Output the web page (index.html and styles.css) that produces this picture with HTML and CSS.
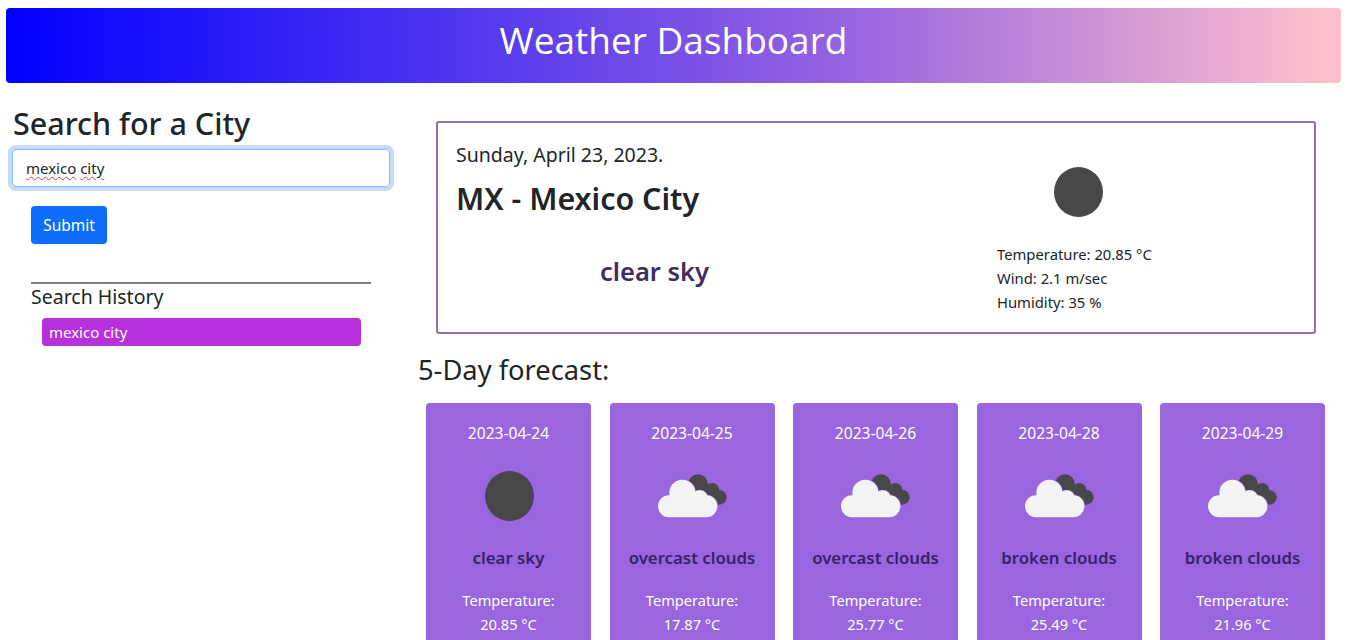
FILE: index.html
```html
<!DOCTYPE html>
<html lang="en">
<head>
  <meta charset="UTF-8" />
  <meta name="viewport" content="width=device-width, initial-scale=1.0"/>
  <title>Weather Dashboard</title>
  <link rel="stylesheet" href="styles.css">
</head>
<body>
  <header class="banner">
    <h1>Weather Dashboard</h1>
  </header>

  <div class="layout">
    <aside class="sidebar">
      <h2>Search for a City</h2>
      <div class="city-input" role="textbox" contenteditable="true"><span class="misspelt">mexico</span> <span class="misspelt">city</span></div>
      <button class="submit-btn">Submit</button>
      <section class="history">
        <h3>Search History</h3>
        <button class="history-btn">mexico city</button>
      </section>
    </aside>

    <main class="content">
      <section class="today">
        <div class="today-left">
          <p class="today-date">Sunday, April 23, 2023.</p>
          <h2 class="today-city">MX - Mexico City</h2>
          <p class="today-desc">clear sky</p>
        </div>
        <div class="today-right">
          <div class="today-icon"><span class="sun"></span></div>
          <ul class="today-stats">
            <li>Temperature: 20.85 °C</li>
            <li>Wind: 2.1 m/sec</li>
            <li>Humidity: 35 %</li>
          </ul>
        </div>
      </section>

      <h3 class="forecast-title">5-Day forecast:</h3>
      <div class="forecast">
        <article class="card">
          <p class="card-date">2023-04-24</p>
          <div class="card-icon"><span class="sun"></span></div>
          <p class="card-desc">clear sky</p>
          <p class="card-temp">Temperature:<br>20.85 °C</p>
        </article>
        <article class="card">
          <p class="card-date">2023-04-25</p>
          <div class="card-icon"><svg class="cloud" viewBox="0 0 210 138"><use href="#clouds"/></svg></div>
          <p class="card-desc">overcast clouds</p>
          <p class="card-temp">Temperature:<br>17.87 °C</p>
        </article>
        <article class="card">
          <p class="card-date">2023-04-26</p>
          <div class="card-icon"><svg class="cloud" viewBox="0 0 210 138"><use href="#clouds"/></svg></div>
          <p class="card-desc">overcast clouds</p>
          <p class="card-temp">Temperature:<br>25.77 °C</p>
        </article>
        <article class="card">
          <p class="card-date">2023-04-28</p>
          <div class="card-icon"><svg class="cloud" viewBox="0 0 210 138"><use href="#clouds"/></svg></div>
          <p class="card-desc">broken clouds</p>
          <p class="card-temp">Temperature:<br>25.49 °C</p>
        </article>
        <article class="card">
          <p class="card-date">2023-04-29</p>
          <div class="card-icon"><svg class="cloud" viewBox="0 0 210 138"><use href="#clouds"/></svg></div>
          <p class="card-desc">broken clouds</p>
          <p class="card-temp">Temperature:<br>21.96 °C</p>
        </article>
      </div>
    </main>
  </div>

  <svg class="sprites" width="0" height="0">
    <symbol id="clouds" viewBox="0 0 210 138">
      <g fill="#48484a">
        <circle cx="120" cy="31" r="30"/>
        <circle cx="163" cy="48" r="21"/>
        <circle cx="184" cy="70" r="22"/>
        <rect x="115" y="40" width="60" height="50"/>
      </g>
      <g fill="#f3f3f3" stroke="#9966e0" stroke-width="4">
        <circle cx="73" cy="56" r="39"/>
        <circle cx="125" cy="74" r="25"/>
        <rect x="0" y="64" width="178" height="66" rx="33"/>
      </g>
      <g fill="#f3f3f3">
        <circle cx="73" cy="56" r="39"/>
        <circle cx="125" cy="74" r="25"/>
        <rect x="0" y="64" width="178" height="66" rx="33"/>
      </g>
    </symbol>
  </svg>
</body>
</html>
```

FILE: styles.css
```css
* { box-sizing: border-box; }
html, body { height: 640px; overflow: hidden; }
body { margin: 0; padding: 8px 11px 0 6px; font-family: "Noto Sans", sans-serif; color: #212529; background: #fff; }
h1, h2, h3, p, ul { margin: 0; padding: 0; font-weight: 400; }
ul { list-style: none; }

.banner { height: 75px; padding-bottom: 12px; display: flex; align-items: center; justify-content: center; border-radius: 4px; background: linear-gradient(to right, #0000ff, #9966e0 64%, #ffc0cb 99%); }
.banner h1 { color: #fff; font-size: 37px; font-family: "Open Sans", sans-serif; }

.layout { display: flex; }
.sidebar { width: 412px; flex: none; padding-top: 21px; }
.sidebar h2 { font-size: 30.5px; line-height: 38px; padding-left: 7px; font-weight: 500; }
.city-input { margin: 7px 0 0 6px; width: 378px; height: 38px; padding: 0 13px; font-size: 15px; line-height: 36px; border: 1px solid #86b7fe; border-radius: 4px; box-shadow: 0 0 0 4px #c2dbfe; outline: none; }
.misspelt { text-decoration: underline wavy #d43b3b 1px; text-underline-offset: 2px; }
.submit-btn { display: block; margin: 19px 0 0 25px; width: 76px; height: 38px; font: 15.5px "Noto Sans", sans-serif; color: #fff; background: #0d6efd; border: none; border-radius: 4px; }
.history { margin: 38px 0 0 25px; width: 340px; border-top: 2px solid #808080; }
.history h3 { font-size: 19.5px; line-height: 26px; }
.history-btn { display: block; margin: 8px 0 0 11px; width: 319px; height: 28px; padding: 0 7px; text-align: left; font: 15px "Noto Sans", sans-serif; color: #fff; background: #b82fdc; border: none; border-radius: 4px; }

.content { flex: 1; min-width: 0; padding-top: 38px; }
.today { margin-left: 18px; width: 880px; height: 213px; display: grid; grid-template-columns: 397px 162px; column-gap: 144px; padding: 0 18px; border: 2px solid #9370b0; border-radius: 3px; }
.today-date { margin-top: 18px; font-size: 19.5px; line-height: 27px; }
.today-city { margin-top: 11px; font-size: 30.4px; line-height: 40px; font-weight: 600; }
.today-desc { margin-top: 34px; text-align: center; font-size: 25.5px; line-height: 36px; font-weight: 600; color: #3f2d5e; }
.today-icon { margin-top: 44px; height: 50px; display: flex; justify-content: center; }
.today-stats { margin-top: 25px; font-size: 14.8px; line-height: 24px; }

.sun { display: block; width: 49px; height: 50px; border-radius: 50%; background: #48484a; }

.forecast-title { margin: 17px 0 0 0; font-size: 27.3px; line-height: 38px; }
.forecast { margin-top: 14px; margin-left: 8px; width: 899px; display: flex; justify-content: space-between; }
.card { width: 165px; height: 300px; flex: none; padding-top: 18px; text-align: center; color: #fff; background: #9966e0; border-radius: 4px; }
.card-date { font-size: 15.6px; line-height: 24px; }
.card-icon { margin-top: 26px; padding-left: 1px; height: 50px; display: flex; justify-content: center; }
.cloud { width: 70px; height: 46px; margin-top: 3px; }
.card-desc { margin-top: 25px; font-size: 16.8px; line-height: 24px; font-weight: 600; color: #3a1f6b; }
.card-temp { margin-top: 18px; font-size: 14.6px; line-height: 24px; }

.sprites { display: block; }
```
